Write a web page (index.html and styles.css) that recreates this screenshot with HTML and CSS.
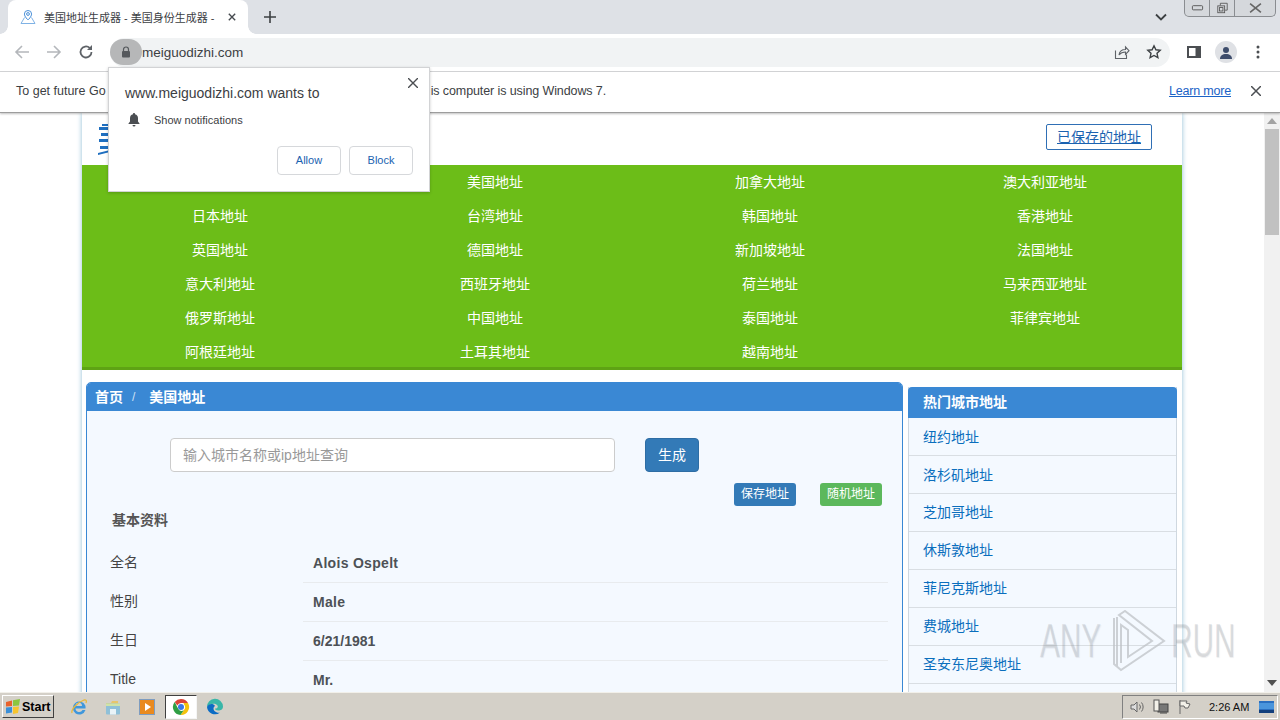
FILE: index.html
```html
<!DOCTYPE html>
<html lang="zh">
<head>
<meta charset="utf-8">
<title>美国地址生成器</title>
<link rel="stylesheet" href="styles.css">
</head>
<body>
<div class="screen">
  <div class="tabstrip">
    <div class="tab">
      <svg class="favicon" viewBox="0 0 16 16" fill="none" stroke="#4a90d9" stroke-width="1"><path d="M8 1.500a3.600 3.600 0 0 1 3.600 3.600C11.600 7.600 8 11 8 11S4.400 7.600 4.400 5.100A3.600 3.600 0 0 1 8 1.500z"/><circle cx="8" cy="5" r="1.400"/><path d="M4.500 8.500 1 14.500h14l-3.500-6" stroke="#7fb2e5"/></svg>
      <span class="tab-title">美国地址生成器 - 美国身份生成器 -</span>
      <svg class="tab-x" viewBox="0 0 10 10" stroke="#45494e" stroke-width="1.700"><path d="M1 1l8 8M9 1l-8 8"/></svg>
    </div>
    <svg class="newtab" viewBox="0 0 12 12" stroke="#3c4043" stroke-width="1.600"><path d="M6 0v12M0 6h12"/></svg>
    <svg class="tab-menu" viewBox="0 0 12 8" fill="none" stroke="#3c4043" stroke-width="1.800"><path d="M1 1.500l5 5 5-5"/></svg>
    <div class="winctl">
      <div class="winbtn"><svg viewBox="0 0 14 8" fill="none" stroke="#555"><rect x="1.500" y="1.500" width="11" height="4.500" rx="1"/></svg></div>
      <div class="winbtn"><svg viewBox="0 0 14 14" fill="none" stroke="#555"><rect x="1.500" y="4.500" width="8" height="8"/><path d="M4.500 4V1.500h8v8H10"/><rect x="3.500" y="6.500" width="4" height="4"/></svg></div>
      <div class="winbtn wide"><svg viewBox="0 0 12 10" fill="none" stroke="#666" stroke-width="1.500"><path d="M1 1l10 8M11 1L1 9"/></svg></div>
    </div>
  </div>

  <div class="toolbar">
    <svg class="nav-ico first" viewBox="0 0 16 16" fill="none" stroke="#b4b7bb" stroke-width="1.600"><path d="M15 8H2M8 2 2 8l6 6"/></svg>
    <svg class="nav-ico" viewBox="0 0 16 16" fill="none" stroke="#b4b7bb" stroke-width="1.600"><path d="M1 8h13M8 2l6 6-6 6"/></svg>
    <svg class="nav-ico" viewBox="0 0 16 16" fill="none" stroke="#5f6368" stroke-width="1.800"><path d="M13.500 8A5.500 5.500 0 1 1 11.700 3.900"/><path d="M14 1v5H9" fill="#5f6368" stroke="none"/></svg>
    <div class="omnibox">
      <div class="lock-pill"><svg viewBox="0 0 10 12" width="10" height="12"><path d="M2.500 5V3.500a2.500 2.500 0 0 1 5 0V5" fill="none" stroke="#55585c" stroke-width="1.200"/><rect x="1" y="5" width="8" height="6.500" rx="1" fill="#55585c"/></svg></div>
      <span class="url">meiguodizhi.com</span>
      <div class="omni-right">
        <svg class="omni-ico" viewBox="0 0 16 16" fill="none" stroke="#5f6368" stroke-width="1.100"><path d="M1.500 6.500v8h11v-4"/><path d="M5 11c.5-3.500 3-5.500 6.500-5.500V3l3.500 3.700-3.500 3.600V8C9 8 6.500 9 5 11z"/></svg>
        <svg class="omni-ico" viewBox="0 0 16 16" fill="none" stroke="#3c4043" stroke-width="1.400"><path d="M8 1.800l1.900 4 4.300.5-3.200 3 .9 4.300L8 11.500l-3.900 2.100.9-4.300-3.200-3 4.300-.5z"/></svg>
      </div>
    </div>
    <svg class="panel-ico" viewBox="0 0 14 12"><rect width="14" height="12" fill="#4b4e52"/><rect x="2" y="2" width="6.500" height="8" fill="#fff"/></svg>
    <div class="avatar"><svg viewBox="0 0 14 14" width="14" height="14" fill="#3e4d6c"><circle cx="7" cy="4" r="3"/><path d="M1 13c0-3.500 2.500-5 6-5s6 1.500 6 5z"/></svg></div>
    <svg class="dots" viewBox="0 0 4 14" fill="#4b4e52"><circle cx="2" cy="2" r="1.500"/><circle cx="2" cy="7" r="1.500"/><circle cx="2" cy="12" r="1.500"/></svg>
  </div>

  <div class="infobar">
    <span class="info-text">To get future Go</span>
    <span class="info-text info-rest">is computer is using Windows 7.</span>
    <span class="learn">Learn more</span>
    <svg class="info-x" viewBox="0 0 10 10" stroke="#4b4e52" stroke-width="1.500"><path d="M0 0l10 10M10 0L0 10"/></svg>
  </div>

  <div class="viewport">
    <div class="page">
      <div class="container">
        <header class="site-head">
          <svg class="logo" viewBox="0 0 13 32" fill="#1f6fc0"><rect x="4" y="0" width="8" height="2"/><rect x="1" y="3" width="10" height="3"/><rect x="3" y="9" width="8" height="3"/><rect x="1" y="15" width="11" height="3"/><rect x="2" y="22" width="9" height="3"/><path d="M0 31l12-3v-2L0 29z"/></svg>
          <a class="saved">已保存的地址</a>
        </header>
        <nav class="country-nav">
          <a></a><a>美国地址</a><a>加拿大地址</a><a>澳大利亚地址</a>
          <a>日本地址</a><a>台湾地址</a><a>韩国地址</a><a>香港地址</a>
          <a>英国地址</a><a>德国地址</a><a>新加坡地址</a><a>法国地址</a>
          <a>意大利地址</a><a>西班牙地址</a><a>荷兰地址</a><a>马来西亚地址</a>
          <a>俄罗斯地址</a><a>中国地址</a><a>泰国地址</a><a>菲律宾地址</a>
          <a>阿根廷地址</a><a>土耳其地址</a><a>越南地址</a><a></a>
        </nav>
        <div class="columns">
          <section class="main-panel">
            <div class="crumbs"><b>首页</b><span class="sep">/</span><b>美国地址</b></div>
            <div class="panel-body">
              <div class="search-row">
                <div class="search-input">输入城市名称或ip地址查询</div>
                <div class="btn-generate">生成</div>
              </div>
              <div class="action-row">
                <div class="btn-small blue">保存地址</div>
                <div class="btn-small green">随机地址</div>
              </div>
              <h3 class="section-title">基本资料</h3>
              <div class="info-row"><span class="label">全名</span><span class="value">Alois Ospelt</span></div>
              <div class="info-row"><span class="label">性别</span><span class="value">Male</span></div>
              <div class="info-row"><span class="label">生日</span><span class="value tight">6/21/1981</span></div>
              <div class="info-row"><span class="label">Title</span><span class="value tight">Mr.</span></div>
            </div>
          </section>
          <aside class="side-panel">
            <div class="side-head">热门城市地址</div>
            <a class="side-item">纽约地址</a>
            <a class="side-item">洛杉矶地址</a>
            <a class="side-item">芝加哥地址</a>
            <a class="side-item">休斯敦地址</a>
            <a class="side-item">菲尼克斯地址</a>
            <a class="side-item">费城地址</a>
            <a class="side-item">圣安东尼奥地址</a>
          </aside>
        </div>
      </div>
    </div>
    <div class="scrollbar">
      <svg class="arrow" viewBox="0 0 10 6" fill="#a3a3a3"><path d="M5 0l5 6H0z"/></svg>
      <div class="thumb"></div>
      <svg class="arrow down" viewBox="0 0 10 6" fill="#505050"><path d="M5 6 0 0h10z"/></svg>
    </div>
  </div>

  <div class="taskbar">
    <div class="start">
      <svg viewBox="0 0 16 16" width="16" height="16"><path d="M1 3l6-1.500V7L1 7.500z" fill="#e8622c"/><path d="M8 1.300 15 0l-1 6.500-6 .5z" fill="#8cc63f"/><path d="M1 8.500 7 8v5.500l-6 1z" fill="#3a8fd8"/><path d="M8 8l6-.5-1 6.500-5 1z" fill="#f7c52e"/></svg>
      <span>Start</span>
    </div>
    <div class="quick">
      <div class="task-ico"><svg viewBox="0 0 18 18" width="18" height="18" fill="none"><path d="M15.500 10.500H5.500a3.700 3.700 0 0 0 7 1.500h3a6.500 6.500 0 1 1-.2-4.500c.3 1 .3 2 .2 3zM5.500 8h6.500a3.200 3.200 0 0 0-6.500 0z" fill="#3f97dc" fill-rule="evenodd"/><path d="M2 15C1 12 6 5 14 2c2-.5 3 .5 2 3" stroke="#e8b83a" stroke-width="1.300"/></svg></div>
      <div class="task-ico"><svg viewBox="0 0 18 18" width="18" height="18"><path d="M2 5h5l1-2h6v3H2z" fill="#e7c66c"/><rect x="2" y="5.500" width="14" height="11" rx="1" fill="#8fc0d8"/><rect x="6" y="11" width="6" height="5.500" fill="#e9f3f7"/><rect x="2" y="5.500" width="14" height="2.500" fill="#cfe3a8"/></svg></div>
      <div class="task-ico"><svg viewBox="0 0 18 18" width="18" height="18"><rect x="1.500" y="1.500" width="15" height="15" fill="#e98a1f" stroke="#7d9cc0"/><path d="M7 5l6 4-6 4z" fill="#fff"/></svg></div>
      <div class="task-ico active"><svg viewBox="0 0 18 18" width="18" height="18"><path d="M9 1a8 8 0 0 1 7 4H9a4 4 0 0 0-3.700 2.500L2.700 4A8 8 0 0 1 9 1z" fill="#db4437"/><path d="M16 5a8 8 0 0 1-7.500 12l3.800-5.500A4 4 0 0 0 12 6.500L11.500 5z" fill="#f4c20d"/><path d="M2.700 4 6.300 11a4 4 0 0 0 5.500 1.300L8.500 17A8 8 0 0 1 2.700 4z" fill="#2f9e44"/><circle cx="9" cy="9" r="3" fill="#3b78e7"/></svg></div>
      <div class="task-ico"><svg viewBox="0 0 18 18" width="18" height="18"><path d="M1 9a8 8 0 0 1 16-.5c0 3-2.500 4-4.500 4-2.500 0-3.500-1-3.500-2 3 0 3.500-2 2-3.500C9 5 3.500 5.500 1 9z" fill="#39b6a8"/><path d="M1 9c1-3 6-4.500 8-1-2 1-2.500 5 2 6.500 1 .3 2 .2 3 0A8 8 0 0 1 1 9z" fill="#0b6cc4"/></svg></div>
    </div>
    <div class="tray">
      <svg class="tray-ico" viewBox="0 0 16 16" fill="none" stroke="#666"><path d="M2 6h3l3-3v10l-3-3H2z" fill="#ddd"/><path d="M10.500 5.500a4 4 0 0 1 0 5M12.500 3.500a7 7 0 0 1 0 9"/></svg>
      <svg class="tray-ico" viewBox="0 0 16 16"><rect x="5" y="5" width="10" height="8" fill="#777" stroke="#444"/><rect x="1" y="1" width="5" height="11" fill="#f2f0e8" stroke="#555"/><path d="M7 14h7" stroke="#444"/></svg>
      <svg class="tray-ico" viewBox="0 0 16 16" fill="#f2f0e8" stroke="#666"><path d="M3 1v14"/><path d="M3 2h7l-1 2 4 1-2 4H8L7 7H3z"/></svg>
      <span class="clock">2:26 AM</span>
      <svg class="show-desk" viewBox="0 0 15 12" preserveAspectRatio="none"><rect width="15" height="12" fill="#2a6fc0"/><rect y="2" width="15" height="6" fill="#4a95dc"/><rect y="9" width="15" height="3" fill="#123f7c"/></svg>
    </div>
  </div>

  <div class="popup">
    <svg class="popup-x" viewBox="0 0 10 10" stroke="#4b4e52" stroke-width="1.400"><path d="M0 0l10 10M10 0L0 10"/></svg>
    <div class="popup-title">www.meiguodizhi.com wants to</div>
    <div class="popup-line">
      <svg viewBox="0 0 14 14" width="14" height="14" fill="#4b4e52"><path d="M7 0a1 1 0 0 1 1 1.200c2 .5 3 2 3 4v3.300l1.500 2V11h-11v-.5L3 8.500V5.200c0-2.200 1-3.700 3-4A1 1 0 0 1 7 0z"/><path d="M5.500 12h3a1.500 1.500 0 0 1-3 0z"/></svg>
      <span>Show notifications</span>
    </div>
    <div class="popup-actions">
      <div class="popup-btn">Allow</div>
      <div class="popup-btn">Block</div>
    </div>
  </div>

  <div class="watermark">
    <span class="wm-text">ANY</span>
    <svg class="wm-logo" viewBox="0 0 54 62" fill="none" stroke="#bfc3c7" stroke-width="2"><path d="M2 8v46l7 6 43-29L13 1 7 5l33 26-24 16V20l-7-5v38"/><path d="M5 7v49"/></svg>
    <span class="wm-text">RUN</span>
  </div>
</div>
</body>
</html>
```
FILE: styles.css
```css
* { box-sizing: border-box; }
html, body { margin: 0; padding: 0; overflow: hidden; }
body { font-family: "Liberation Sans", "Noto Sans CJK SC", sans-serif; color: #333; }
.screen { position: relative; width: 1280px; height: 720px; display: flex; flex-direction: column; overflow: hidden; background: #fff; }

.tabstrip { height: 34px; background: #dee1e6; display: flex; align-items: flex-start; flex: none; }
.tab { position: relative; width: 240px; height: 34px; margin-left: 8px; background: #fff; border-radius: 8px 8px 0 0; display: flex; align-items: center; padding: 0 12px; }
.tab::before, .tab::after { content: ""; position: absolute; bottom: 0; width: 8px; height: 8px; }
.tab::before { left: -8px; background: radial-gradient(circle at 0 0, transparent 7.500px, #fff 8px); }
.tab::after { right: -8px; background: radial-gradient(circle at 100% 0, transparent 7.500px, #fff 8px); }
.favicon { width: 16px; height: 16px; flex: none; }
.tab-title { font-size: 11px; color: #3c4043; margin-left: 8px; white-space: nowrap; width: 170px; flex: none; }
.tab-x { width: 8px; height: 8px; margin-left: 14px; flex: none; }
.newtab { width: 12px; height: 12px; margin: 11px 0 0 16px; flex: none; }
.tab-menu { width: 12px; height: 8px; margin: 13px 0 0 879px; flex: none; }
.winctl { display: flex; margin-left: 17px; height: 17px; border: 1px solid #8a8d91; border-top: 0; border-radius: 0 0 5px 5px; width: 92px; background: #d5d8dc; }
.winbtn { width: 25px; border-right: 1px solid #8a8d91; display: flex; align-items: center; justify-content: center; }
.winbtn svg { width: 13px; height: 12px; }
.winbtn.wide { flex: 1; border-right: 0; }

.toolbar { height: 38px; flex: none; background: #fff; border-bottom: 1px solid #d5d6d8; display: flex; align-items: center; padding: 0 0 1px 0; }
.nav-ico { width: 16px; height: 16px; margin-left: 16px; flex: none; }
.nav-ico.first { margin-left: 14px; }
.omnibox { width: 1060px; height: 29px; margin-left: 16px; background: #f1f3f4; border-radius: 15px; display: flex; align-items: center; flex: none; }
.lock-pill { width: 32px; height: 26px; border-radius: 13px; background: #b6b7b8; display: flex; align-items: center; justify-content: center; flex: none; }
.url { font-size: 13.500px; color: #3c4043; }
.omni-right { margin-left: auto; display: flex; gap: 16px; padding-right: 8px; }
.omni-ico { width: 16px; height: 16px; }
.panel-ico { width: 14px; height: 12px; margin-left: 17px; flex: none; }
.avatar { width: 22px; height: 22px; border-radius: 50%; background: #dfe1e5; margin-left: 14px; display: flex; align-items: flex-end; justify-content: center; padding-bottom: 3px; flex: none; }
.dots { width: 4px; height: 14px; margin-left: 19px; flex: none; }

.infobar { height: 41px; flex: none; background: #fff; border-bottom: 1px solid #9d9d9d; box-shadow: 0 1px 2px rgba(0,0,0,.25); display: flex; align-items: center; padding: 0 19px 2px 16px; position: relative; z-index: 2; }
.info-text { font-size: 12.500px; color: #3c4043; white-space: nowrap; }
.info-rest { margin-left: 325px; letter-spacing: -.1px; }
.learn { margin-left: auto; font-size: 12.500px; letter-spacing: -.2px; color: #1a62c6; text-decoration: underline; }
.info-x { width: 10px; height: 10px; margin-left: 20px; }

.viewport { flex: 1; min-height: 0; display: flex; overflow: hidden; }
.page { flex: 1; min-width: 0; overflow: hidden; }
.container { width: 1100px; margin: 0 auto; background: #fff; box-shadow: 0 0 5px #8fbdd4; }
.site-head { height: 52px; display: flex; align-items: flex-start; justify-content: space-between; padding: 11px 30px 0 16px; }
.logo { width: 13px; height: 32px; }
.saved { width: 106px; height: 26px; border: 1px solid #2f6fb5; border-radius: 2px; font-size: 14px; line-height: 24px; text-align: center; color: #1a62b0; text-decoration: underline; }
.country-nav { display: grid; grid-template-columns: repeat(4, 275px); grid-auto-rows: 34px; height: 205px; background: #6cbd18; border-bottom: 3px solid #5ea314; }
.country-nav a { font-size: 14px; line-height: 34px; text-align: center; color: #fff; padding-left: 1px; }

.columns { display: flex; gap: 5px; padding: 12px 5px 0 4px; align-items: flex-start; }
.main-panel { width: 817px; height: 400px; flex: none; background: #f4f9ff; border: 1px solid #3a88d4; border-radius: 5px 5px 0 0; overflow: hidden; }
.crumbs { height: 28px; background: #3a88d4; color: #fff; font-size: 14px; line-height: 28px; padding-left: 8px; display: flex; }
.sep { margin: 0 14px 0 9px; font-size: 12px; color: #cfe2f5; }
.panel-body { padding: 27px 14px 0 0; }
.search-row { display: flex; padding-left: 83px; gap: 30px; }
.search-input { width: 445px; height: 34px; background: #fff; border: 1px solid #ccc; border-radius: 4px; font-size: 14px; line-height: 32px; color: #999; padding-left: 12px; }
.btn-generate { width: 54px; height: 34px; background: #337ab7; border: 1px solid #2e6da4; border-radius: 4px; color: #fff; font-size: 14px; line-height: 32px; text-align: center; }
.action-row { display: flex; justify-content: flex-end; gap: 24px; margin-top: 11px; padding-right: 6px; }
.btn-small { width: 62px; height: 23px; border-radius: 3px; color: #fff; font-size: 12px; line-height: 23px; text-align: center; }
.btn-small.blue { background: #337ab7; }
.btn-small.green { background: #5cb85c; }
.section-title { margin: 0 0 0 25px; height: 38px; font-size: 14px; line-height: 20px; padding-top: 4px; font-weight: bold; color: #555; }
.info-row { display: flex; height: 39px; margin-left: 23px; }
.label { width: 193px; flex: none; font-size: 14px; line-height: 36px; color: #444; }
.value { flex: 1; padding-left: 10px; font-size: 14px; line-height: 38px; font-weight: bold; letter-spacing: .3px; color: #4d5156; border-bottom: 1px solid #e8ebee; }
.value.tight { letter-spacing: 0; }

.side-panel { width: 269px; height: 400px; margin-top: 5px; flex: none; background: #f4f9ff; border: 1px solid #cfd8e0; border-top: 0; }
.side-head { height: 31px; margin: 0 -1px; background: #3a88d4; color: #fff; font-weight: bold; font-size: 14px; line-height: 30px; padding-left: 15px; border-radius: 4px 4px 0 0; }
.side-item { display: block; height: 38px; line-height: 36px; padding-left: 14px; font-size: 14px; color: #0a6ebd; border-bottom: 1px solid #d9dee3; }
.side-item:nth-child(-n+3) { line-height: 38px; }

.scrollbar { width: 16px; flex: none; background: #f1f1f1; display: flex; flex-direction: column; align-items: center; padding-top: 5px; }
.arrow { width: 10px; height: 6px; flex: none; }
.thumb { width: 14px; height: 106px; margin-top: 5px; background: #c1c1c1; flex: none; }
.arrow.down { margin-top: auto; margin-bottom: 6px; }

.taskbar { height: 28px; flex: none; background: #d4d0c8; border-top: 1px solid #f2f0ea; display: flex; align-items: center; padding: 0 2px; }
.start { width: 52px; height: 23px; display: flex; align-items: center; gap: 1px; padding-left: 2px; background: #d4d0c8; border: 1px solid; border-color: #fff #404040 #404040 #fff; font-size: 12.500px; font-weight: bold; color: #000; flex: none; }
.quick { display: flex; margin-left: 8px; align-items: center; }
.task-ico { width: 34px; height: 24px; display: flex; align-items: center; justify-content: center; }
.task-ico.active { width: 32px; background: #fff; border: 1px solid; border-color: #404040 #f5f5f5 #f5f5f5 #404040; margin: 0 1px; }
.tray { margin-left: auto; width: 156px; height: 24px; border: 1px solid; border-color: #808080 #fff #fff #808080; display: flex; align-items: center; padding-left: 6px; gap: 8px; }
.tray-ico { width: 16px; height: 16px; flex: none; }
.clock { font-size: 11px; color: #111; margin-left: 8px; white-space: nowrap; }
.show-desk { width: 15px; height: 12px; margin-left: 2px; flex: none; }

.popup { position: absolute; left: 108px; top: 67px; width: 322px; height: 125px; background: #fff; border: 1px solid #d2d3d5; box-shadow: 0 1px 3px rgba(0,0,0,.2); padding: 16px 16px 0; z-index: 5; }
.popup-x { position: absolute; right: 11px; top: 10px; width: 10px; height: 10px; }
.popup-title { font-size: 14px; line-height: 18px; color: #3c4043; }
.popup-line { display: flex; align-items: center; gap: 13px; margin-top: 11px; font-size: 11px; color: #3c4043; padding-left: 2px; }
.popup-actions { display: flex; justify-content: flex-end; gap: 8px; margin-top: 19px; }
.popup-btn { width: 64px; height: 29px; border: 1px solid #d6d8db; border-radius: 4px; font-size: 11px; line-height: 27px; text-align: center; color: #1a62b0; }

.watermark { position: absolute; left: 1040px; top: 610px; height: 62px; display: flex; align-items: center; z-index: 6; }
.wm-text { width: 62px; font-size: 48px; line-height: 62px; color: rgba(130,135,140,.2); text-shadow: 1px 1px 1px rgba(130,135,140,.15); transform: scaleX(.62); transform-origin: left center; white-space: nowrap; }
.wm-logo { width: 54px; height: 62px; margin: 0 5px 0 10px; flex: none; opacity: .75; }
```
